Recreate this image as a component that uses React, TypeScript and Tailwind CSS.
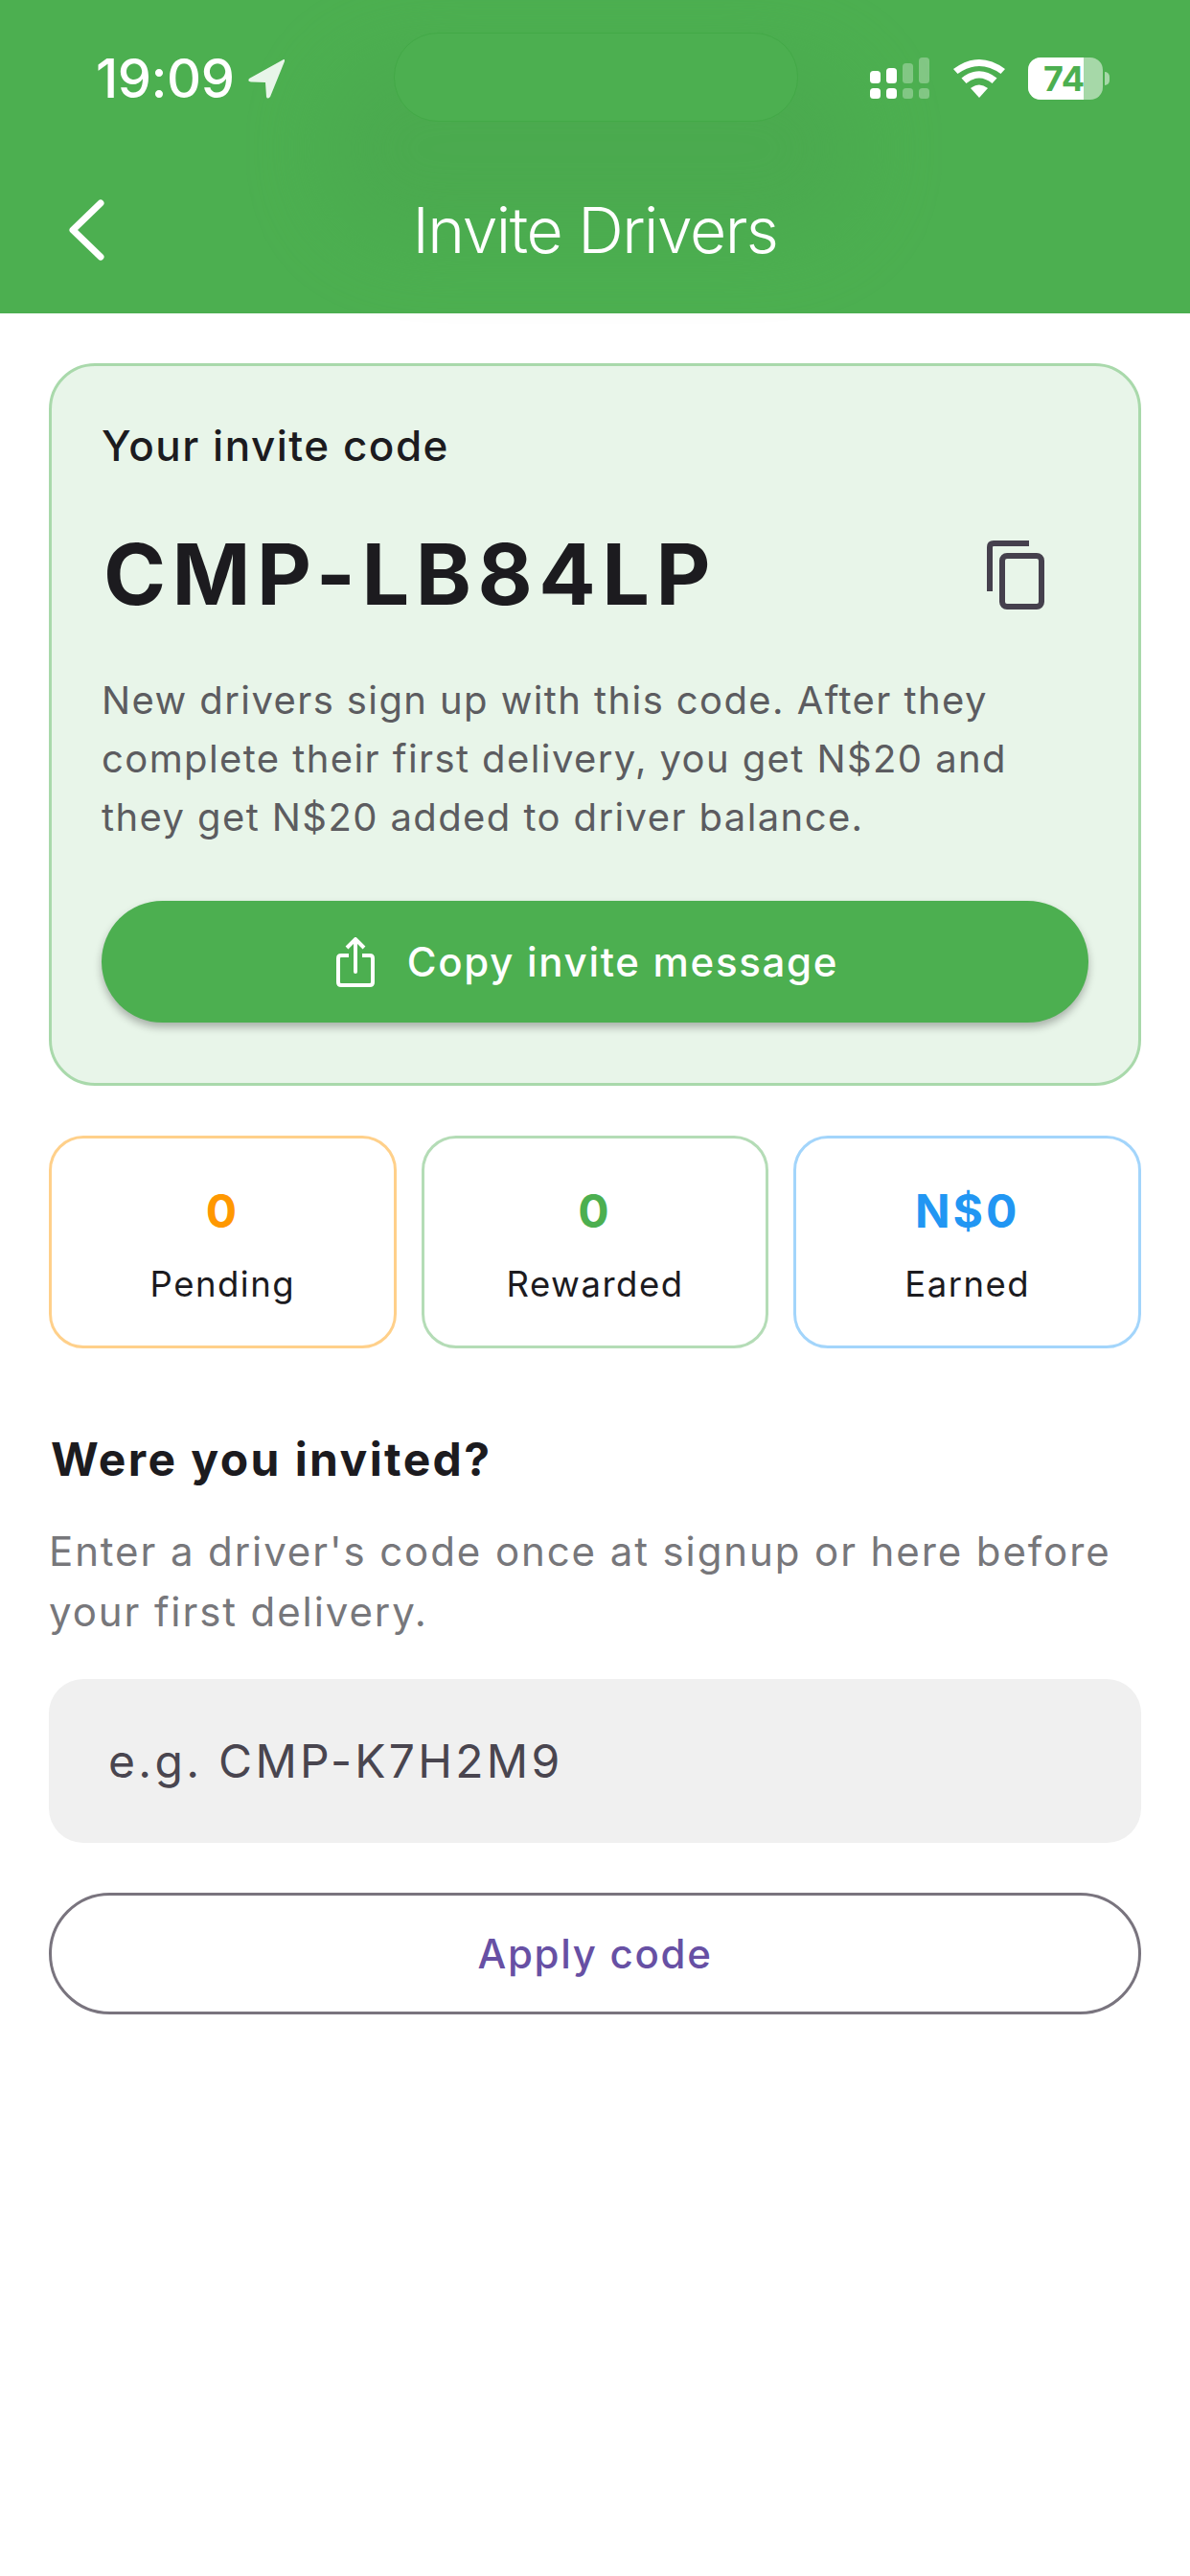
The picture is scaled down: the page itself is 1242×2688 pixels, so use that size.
function LocationArrow() {
  return (
    <svg width="42" height="44" viewBox="0 0 42 44" fill="none">
      <path d="M38 2 L2 22 Q0 25 4 25.5 L19 26 L20 41 Q21 44 24 41 L39 4 Q39.5 1.5 38 2 Z" fill="#e8f5e9" />
    </svg>
  );
}

function Signal() {
  return (
    <svg width="64" height="44" viewBox="0 0 64 44">
      <rect x="1" y="14" width="11" height="13" rx="3.5" fill="#fff" />
      <rect x="18" y="11" width="11" height="16" rx="3.5" fill="#fff" />
      <rect x="35" y="6" width="11" height="21" rx="3.5" fill="#fff" opacity="0.3" />
      <rect x="52" y="0" width="11" height="27" rx="3.5" fill="#fff" opacity="0.3" />
      <rect x="1" y="32" width="11" height="11" rx="3.5" fill="#fff" />
      <rect x="18" y="32" width="11" height="11" rx="3.5" fill="#fff" />
      <rect x="35" y="32" width="11" height="11" rx="3.5" fill="#fff" opacity="0.3" />
      <rect x="52" y="32" width="11" height="11" rx="3.5" fill="#fff" opacity="0.3" />
    </svg>
  );
}

function Wifi() {
  return (
    <svg width="54" height="40" viewBox="0 0 54 40">
      <path d="M27 40 L18 30 Q27 23 36 30 Z" fill="#fff" />
      <path d="M13.5 25 L8.5 19.5 Q27 5 45.5 19.5 L40.5 25 Q27 14 13.5 25 Z" fill="#fff" />
      <path d="M4.5 15 L0 10 Q27 -10 54 10 L49.5 15 Q27 -1 4.5 15 Z" fill="#fff" />
    </svg>
  );
}

function Battery() {
  return (
    <div className="flex items-center gap-[2px]">
      <div className="relative flex h-[44px] w-[78px] items-center overflow-hidden rounded-[13px] bg-[#a6d8a8]">
        <div className="flex h-full w-[58px] bg-white" />
        <span className="absolute left-[16px] top-0 text-[36px] font-bold leading-[44px] text-[#4caf50]">74</span>
      </div>
      <div className="h-[14px] w-[5px] rounded-r-full bg-[#a6d8a8]" />
    </div>
  );
}

function BackIcon() {
  return (
    <svg width="40" height="64" viewBox="0 0 40 64" fill="none" stroke="#fff" strokeWidth="7" strokeLinecap="round" strokeLinejoin="round">
      <path d="M35 4 L6 32 L35 60" />
    </svg>
  );
}

function CopyIcon() {
  return (
    <svg width="62" height="72" viewBox="0 0 62 72" fill="none" stroke="#45404d" strokeWidth="6">
      <path d="M44 3 H7 Q3 3 3 7 V53" />
      <rect x="16" y="16" width="41" height="53" rx="5" />
    </svg>
  );
}

function ShareIcon() {
  return (
    <svg width="40" height="52" viewBox="0 0 40 52" fill="none" stroke="#fff" strokeWidth="4">
      <path d="M20 36 V3" strokeLinecap="round" />
      <path d="M11 11 L20 2 L29 11" />
      <path d="M13 19 H5 Q2 19 2 22 V47 Q2 50 5 50 H35 Q38 50 38 47 V22 Q38 19 35 19 H27" />
    </svg>
  );
}

function Stat({ value, label, border, color }: { value: string; label: string; border: string; color: string }) {
  return (
    <div className={`flex h-[222px] flex-1 flex-col items-center rounded-[36px] border-[3px] bg-white pt-[46px] ${border}`}>
      <div className={`text-[48px] font-bold leading-[60px] tracking-[3px] ${color}`}>{value}</div>
      <div className="mt-[23px] text-[36.5px] leading-[46px] tracking-[1.5px] text-[#1c1b1f]">{label}</div>
    </div>
  );
}

export default function App() {
  return (
    <div className="relative min-h-[2688px] overflow-hidden bg-white font-[family-name:Inter,sans-serif]">
      {/* Status bar + app bar */}
      <div className="relative h-[327px] bg-[#4caf50]">
        <div className="absolute left-[340px] top-[60px] h-[190px] w-[560px] rounded-[90px] bg-[#4aa74e] opacity-60 blur-[40px]" />
        <div className="absolute left-[411px] top-[34px] h-[93px] w-[422px] rounded-[46px] border border-[#43a947] bg-[#4caf50]" />
        <div className="relative flex items-center justify-between pl-[100px] pr-[84px] pt-[52px]">
          <div className="flex items-center gap-[14px]">
            <span className="text-[56px] font-medium leading-[60px] tracking-[-0.5px] text-white">19:09</span>
            <LocationArrow />
          </div>
          <div className="flex items-center gap-[24px]">
            <Signal />
            <Wifi />
            <Battery />
          </div>
        </div>
        <div className="relative mt-[78px] flex h-[100px] items-center justify-center">
          <div className="absolute left-[70px] top-[18px]">
            <BackIcon />
          </div>
          <span className="text-[66px] font-light leading-[80px] tracking-[-1.5px] text-white">Invite Drivers</span>
        </div>
      </div>

      <div className="px-[51px] pt-[52px]">
        {/* Invite code card */}
        <div className="h-[754px] rounded-[48px] border-[3px] border-[#a9d9ab] bg-[#e8f5e9] px-[52px] pt-[50px]">
          <div className="text-[44px] font-medium leading-[66px] tracking-[1.5px] text-[#1c1b1f]">Your invite code</div>
          <div className="mt-[51px] flex items-center justify-between">
            <div className="ml-[2px] text-[88px] font-bold leading-[100px] tracking-[6.5px] text-[#1c1b1f]">CMP-LB84LP</div>
            <div className="mr-[44px] mt-[2px]">
              <CopyIcon />
            </div>
          </div>
          <p className="mt-[51px] text-[40px] leading-[61px] tracking-[1.4px] text-[#5c5c60]">
            New drivers sign up with this code. After they complete their first delivery, you get N$20 and they get N$20
            added to driver balance.
          </p>
          <button
            type="button"
            className="mt-[57px] flex h-[127px] w-full items-center justify-center gap-[34px] rounded-full bg-[#4caf50] pr-[16px] text-[42px] font-medium tracking-[1.7px] text-white shadow-[0_5px_8px_rgba(0,0,0,0.28)]"
          >
            <ShareIcon />
            Copy invite message
          </button>
        </div>

        {/* Stats */}
        <div className="mt-[52px] flex gap-[26px]">
          <Stat value="0" label="Pending" border="border-[#ffd08a]" color="text-[#ff9800]" />
          <Stat value="0" label="Rewarded" border="border-[#b4dcb6]" color="text-[#4caf50]" />
          <Stat value="N$0" label="Earned" border="border-[#a3d5fb]" color="text-[#2196f3]" />
        </div>

        {/* Referred by */}
        <h2 className="mt-[83px] pl-[2px] text-[48px] font-bold leading-[66px] tracking-[2.4px] text-[#1c1b1f]">
          Were you invited?
        </h2>
        <p className="mt-[31px] text-[42px] leading-[63px] tracking-[1.9px] text-[#77777b]">
          Enter a driver's code once at signup or here before your first delivery.
        </p>
        <input
          readOnly
          placeholder="e.g. CMP-K7H2M9"
          className="mt-[39px] block h-[171px] w-full rounded-[36px] bg-[#f0f0f0] px-[62px] text-[48px] tracking-[3.3px] outline-none placeholder:text-[#49454f]"
        />
        <button
          type="button"
          className="mt-[52px] block h-[127px] w-full rounded-full border-[3px] border-[#79747e] bg-white text-[42px] font-medium tracking-[1.7px] text-[#6750a4]"
        >
          Apply code
        </button>
      </div>
    </div>
  );
}
